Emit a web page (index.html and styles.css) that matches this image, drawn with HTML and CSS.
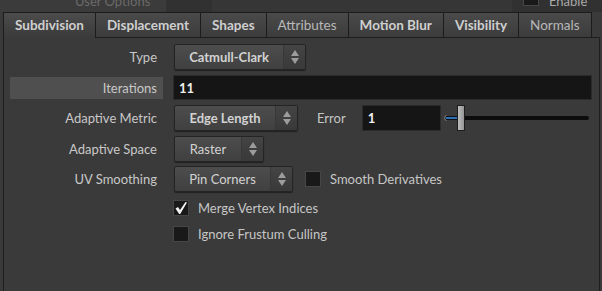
FILE: index.html
```html
<!DOCTYPE html>
<html lang="en">
    <head>
        <meta charset="UTF-8">
        <meta name="viewport" content="width=device-width, initial-scale=1.0">
        <title>Subdivision</title>
        <link rel="stylesheet" href="styles.css">
    </head>
    <body>
        <div class="topbar">
            <div class="user-tab"><span>User Options</span></div>
            <div class="top-gap"></div>
            <div class="top-field"></div>
            <div class="top-enable">
                <span class="check small"></span>
                <span class="enable-text">Enable</span>
            </div>
        </div>

        <div class="tabs">
            <div class="tab active bold">Subdivision</div>
            <div class="tab bold">Displacement</div>
            <div class="tab bold">Shapes</div>
            <div class="tab">Attributes</div>
            <div class="tab bold">Motion Blur</div>
            <div class="tab bold">Visibility</div>
            <div class="tab">Normals</div>
        </div>

        <div class="panel">
            <div class="row">
                <div class="label">Type</div>
                <div class="menu w-type bold"><span class="menu-text">Catmull-Clark</span><span class="arrows"></span></div>
            </div>

            <div class="row">
                <div class="label hilite">Iterations</div>
                <div class="field wide">11</div>
            </div>

            <div class="row">
                <div class="label">Adaptive Metric</div>
                <div class="menu w-metric bold"><span class="menu-text">Edge Length</span><span class="arrows"></span></div>
                <div class="sub-label">Error</div>
                <div class="field small-field">1</div>
                <div class="slider">
                    <span class="bracket"></span>
                    <span class="fill"></span>
                    <span class="track"></span>
                    <span class="handle"></span>
                </div>
            </div>

            <div class="row">
                <div class="label">Adaptive Space</div>
                <div class="menu w-space"><span class="menu-text">Raster</span><span class="arrows"></span></div>
            </div>

            <div class="row">
                <div class="label">UV Smoothing</div>
                <div class="menu w-uv"><span class="menu-text">Pin Corners</span><span class="arrows"></span></div>
                <span class="check side"></span>
                <span class="check-text">Smooth Derivatives</span>
            </div>

            <div class="row check-row">
                <div class="label"></div>
                <span class="check on">
                    <svg width="14" height="14" viewBox="0 0 14 14">
                        <path d="M1.5 7.5 L4 6 L6 9 L11.5 1 L13 1.5 L6.2 13 L5.2 13 Z" fill="#f2f2f2"/>
                    </svg>
                </span>
                <span class="check-text">Merge Vertex Indices</span>
            </div>

            <div class="row check-row">
                <div class="label"></div>
                <span class="check"></span>
                <span class="check-text">Ignore Frustum Culling</span>
            </div>
        </div>
    </body>
</html>
```

FILE: styles.css
```css
body {
    margin: 0;
    background-color: #3a3a3a;
    font-family: Lato, "Noto Sans", sans-serif;
    font-size: 13px;
    color: #c6c6c6;
    overflow: hidden;
}

.bold {
    font-weight: bold;
}

/* top strip, mostly scrolled away */
.topbar {
    display: flex;
    height: 12px;
    overflow: hidden;
    background-color: #313131;
}

.user-tab {
    width: 166px;
    background-color: #3b3b3b;
    color: #6a6a6a;
    line-height: 12px;
}

.user-tab span {
    display: block;
    margin: -5px 0 0 75px;
}

.top-gap {
    width: 46px;
}

.top-field {
    width: 300px;
    background-color: #363636;
}

.top-enable {
    display: flex;
    align-items: flex-start;
    padding-left: 11px;
}

.top-enable .check {
    margin-top: -10px;
}

.enable-text {
    margin: -5px 0 0 10px;
    line-height: 12px;
    color: #aaa;
}

/* tabs */
.tabs {
    display: flex;
    margin-left: 3px;
    height: 25px;
}

.tab {
    flex: none;
    white-space: nowrap;
    padding: 0 11px;
    line-height: 24px;
    font-size: 13.5px;
    color: #b8b8b8;
    background: linear-gradient(#4a4a4a, #3c3c3c);
    border: 1px solid #1c1c1c;
    border-left: none;
    border-bottom: none;
}

.tab:first-child {
    border-left: 1px solid #1c1c1c;
}

.tab.bold {
    color: #cfcfcf;
}

.tab.active {
    background: linear-gradient(#4c4c4c, #3a3a3a);
    position: relative;
    z-index: 1;
    height: 25px;
}

/* main panel */
.panel {
    margin-left: 3px;
    width: 595px;
    height: 260px;
    border: 1px solid #1e1e1e;
    border-bottom: none;
    background-color: #3a3a3a;
    padding-top: 6px;
    display: flex;
    flex-direction: column;
    gap: 4.5px;
}

.row {
    display: flex;
    align-items: center;
    height: 26px;
}

.check-row {
    height: 20px;
    margin-top: 1.5px;
}

.label {
    flex: none;
    width: 147px;
    margin-left: 6px;
    padding-right: 6px;
    margin-right: 11px;
    text-align: right;
    color: #c8c8c8;
}

.label.hilite {
    background-color: #4f4f4f;
    line-height: 22px;
    margin-right: 10px;
}

/* drop-down menus */
.menu {
    display: flex;
    height: 24px;
    border: 1px solid #242424;
    border-radius: 2px;
    background: linear-gradient(#4d4d4d, #404040);
    box-shadow: 0 1px 1px rgba(0, 0, 0, 0.45);
    color: #d2d2d2;
}

.menu-text {
    flex: 1;
    text-align: center;
    line-height: 24px;
}

.arrows {
    width: 21px;
    position: relative;
    background: linear-gradient(#444, #393939);
    border-left: 1px solid #383838;
}

.arrows::before,
.arrows::after {
    content: "";
    position: absolute;
    left: 7px;
    border-left: 4px solid transparent;
    border-right: 4px solid transparent;
}

.arrows::before {
    top: 5px;
    border-bottom: 6px solid #9c9c9c;
}

.arrows::after {
    top: 13px;
    border-top: 6px solid #9c9c9c;
}

.w-type {
    width: 130px;
}

.w-metric {
    width: 122px;
}

.w-space {
    width: 88px;
}

.w-uv {
    width: 117px;
}

/* text fields */
.field {
    height: 24px;
    line-height: 24px;
    background-color: #151515;
    border: 1px solid #2b2b2b;
    color: #f0f0f0;
    font-weight: bold;
    padding-left: 5px;
    box-sizing: border-box;
}

.wide {
    width: 419px;
    height: 25px;
}

.sub-label {
    margin: 0 16px 0 19px;
}

.small-field {
    width: 79px;
    height: 26px;
}

/* slider */
.slider {
    position: relative;
    width: 145px;
    height: 26px;
    margin-left: 3px;
}

.bracket {
    position: absolute;
    left: 0;
    top: 10px;
    width: 3px;
    height: 6px;
    border: 1px solid #666;
    border-right: none;
    border-radius: 3px 0 0 3px;
    box-sizing: border-box;
}

.fill {
    position: absolute;
    left: 2px;
    top: 11px;
    width: 12px;
    height: 4px;
    background-color: #2e6fb8;
    border-top: 1px solid #111;
    border-bottom: 1px solid #111;
    box-sizing: border-box;
}

.track {
    position: absolute;
    left: 14px;
    right: 0;
    top: 11px;
    height: 4px;
    background-color: #0c0c0c;
    border-radius: 0 2px 2px 0;
}

.handle {
    position: absolute;
    left: 13px;
    top: 0;
    width: 6px;
    height: 24px;
    background: linear-gradient(90deg, #bdbdbd, #969696);
    border: 1px solid #1d1d1d;
}

/* check boxes */
.check {
    flex: none;
    display: flex;
    align-items: center;
    justify-content: center;
    width: 14px;
    height: 14px;
    background-color: #191919;
    border: 1px solid #464646;
}

.check.side {
    margin-left: 12px;
}

.check-row .check {
    margin-left: -1px;
}

.check-text {
    margin-left: 9px;
    color: #c6c6c6;
}
```
